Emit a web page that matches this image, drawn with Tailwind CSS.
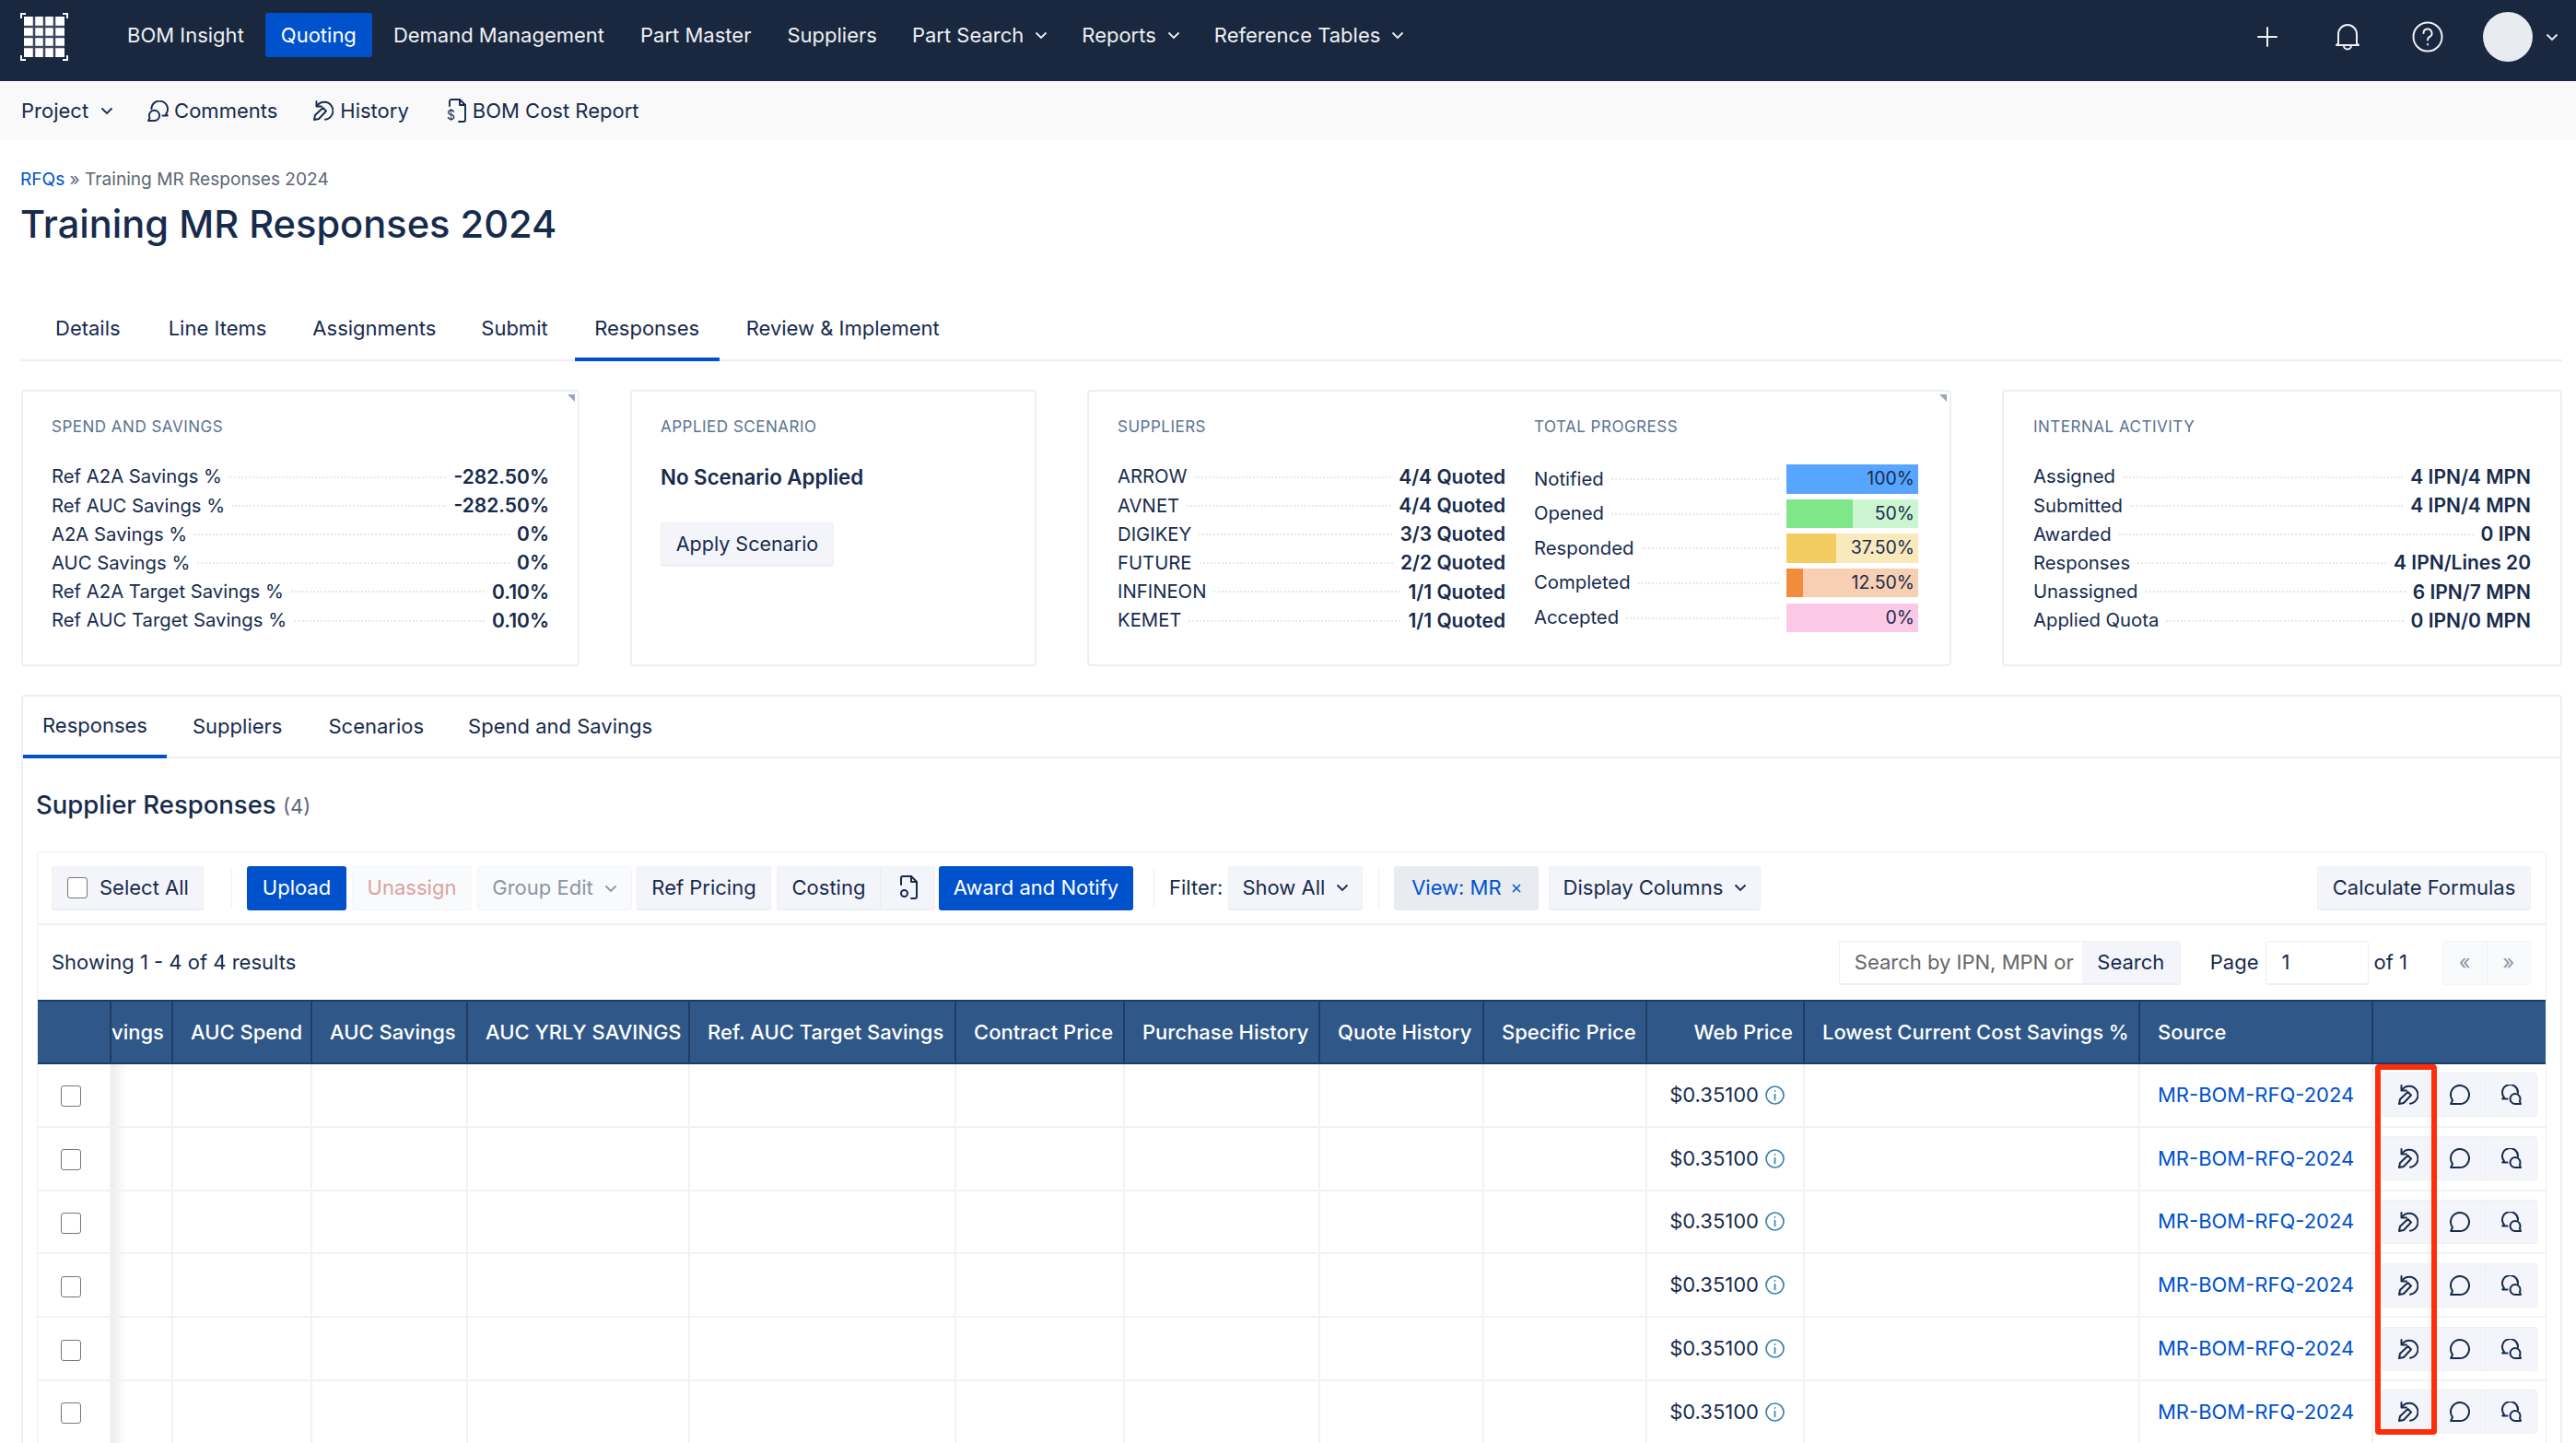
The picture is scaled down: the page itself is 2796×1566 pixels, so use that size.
<!DOCTYPE html>
<html lang="en">
<head>
    <meta charset="UTF-8">
    <meta name="viewport" content="width=device-width, initial-scale=1.0">
    <title>Training MR Responses 2024</title>
    <script src="https://cdn.jsdelivr.net/npm/@tailwindcss/browser@4"></script>
</head>
<body class="bg-white font-['Inter',sans-serif] text-[#172b4d] text-[22px]">
<div class="relative h-[1566px] overflow-hidden">

    <!-- top nav -->
    <header class="h-[88px] bg-[#19273f] flex items-center pl-[22px] pr-[19px] pb-[8px] text-[#eef0f4]">
        <svg class="w-[52px] h-[52px] mr-[47px]" viewBox="0 0 52 52" fill="none">
            <path d="M1 6V1h5M46 1h5v5M1 46v5h5M46 51h5v-5" stroke="#fff" stroke-width="2"/>
            <path d="M4 4h44v44H4z" fill="#fff"/>
            <path d="M15 4v44M26 4v44M37 4v44M4 15h44M4 26h44M4 37h44" stroke="#3a4760" stroke-width="2.500"/>
        </svg>
        <nav class="flex items-center gap-[6px] mb-[4px]">
            <a class="px-[17px] h-[48px] flex items-center">BOM Insight</a>
            <a class="px-[17px] h-[48px] flex items-center bg-[#0052cc] text-white rounded-[3px]">Quoting</a>
            <a class="px-[17px] h-[48px] flex items-center">Demand Management</a>
            <a class="pl-[16px] pr-[16px] h-[48px] flex items-center">Part Master</a>
            <a class="pl-[17px] pr-[15px] h-[48px] flex items-center">Suppliers</a>
            <a class="pl-[17px] pr-[14px] h-[48px] flex items-center gap-[12px]">Part Search <svg class="w-[14px] h-[14px]" viewBox="0 0 14 14" fill="none" stroke="currentColor" stroke-width="1.800"><path d="M1.500 4.500 7 10l5.500-5.500"/></svg></a>
            <a class="pl-[17px] pr-[14px] h-[48px] flex items-center gap-[12px]">Reports <svg class="w-[14px] h-[14px]" viewBox="0 0 14 14" fill="none" stroke="currentColor" stroke-width="1.800"><path d="M1.500 4.500 7 10l5.500-5.500"/></svg></a>
            <a class="px-[17px] h-[48px] flex items-center gap-[12px]">Reference Tables <svg class="w-[14px] h-[14px]" viewBox="0 0 14 14" fill="none" stroke="currentColor" stroke-width="1.800"><path d="M1.500 4.500 7 10l5.500-5.500"/></svg></a>
        </nav>
        <div class="ml-auto flex items-center">
            <svg class="w-[22px] h-[22px] mr-[62px]" viewBox="0 0 22 22" fill="none" stroke="currentColor" stroke-width="2" stroke-linecap="round"><path d="M11 1v20M1 11h20"/></svg>
            <svg class="w-[28px] h-[30px] mr-[56px]" viewBox="0 0 28 30" fill="none" stroke="currentColor" stroke-width="2" stroke-linejoin="round"><path d="M4 22V12a10 10 0 0 1 20 0v10l2 2H2zM10 24.500a4 4 0 0 0 8 0"/></svg>
            <svg class="w-[34px] h-[34px] mr-[43px]" viewBox="0 0 34 34" fill="none" stroke="currentColor" stroke-width="2" stroke-linecap="round"><circle cx="17" cy="17" r="15.500"/><path d="M12.500 13a4.500 4.500 0 1 1 6.500 4c-1.500.8-2 1.800-2 3.500"/><path d="M17 25v.5"/></svg>
            <div class="w-[54px] h-[54px] rounded-full bg-[#e8ebf0] mr-[14px]"></div>
            <svg class="w-[14px] h-[14px]" viewBox="0 0 14 14" fill="none" stroke="currentColor" stroke-width="1.800"><path d="M1.500 4.500 7 10l5.500-5.500"/></svg>
        </div>
    </header>

    <!-- project bar -->
    <div class="h-[64px] bg-[#f9f9f9] flex items-center pl-[23px]">
        <span class="flex items-center gap-[13px] mr-[37px]">Project <svg class="w-[14px] h-[14px]" viewBox="0 0 14 14" fill="none" stroke="currentColor" stroke-width="1.800"><path d="M1.500 4.500 7 10l5.500-5.500"/></svg></span>
        <span class="flex items-center gap-[6px] mr-[39px]">
            <svg class="w-[23px] h-[23px] -scale-x-100" viewBox="0 0 23 23" fill="none" stroke="currentColor" stroke-width="1.900" stroke-linecap="round" stroke-linejoin="round"><path d="M6.500 16.500H1.200L2.900 14.800A8.800 8.800 0 1 1 18.600 9.300"/><path d="M22 22h-6.500a5.600 5.600 0 1 1 5.600-5.600c0 1-.2 1.800-.6 2.600z"/></svg>
            Comments
        </span>
        <span class="flex items-center gap-[7px] mr-[41px]">
            <svg class="w-[22px] h-[22px]" viewBox="0 0 22 22" fill="none" stroke="currentColor" stroke-width="1.900" stroke-linecap="round" stroke-linejoin="round"><path d="M3.500 1v5.500H9"/><path d="M4 6A9.500 9.500 0 1 1 13 20.700"/><path d="m1 21 1-5 8.500-8 3.500 3.500L6 20z"/></svg>
            History
        </span>
        <span class="flex items-center gap-[7px]">
            <svg class="w-[21px] h-[26px]" viewBox="0 0 21 26" fill="none" stroke="currentColor" stroke-width="1.900" stroke-linecap="round" stroke-linejoin="round"><path d="M3 8V3a2 2 0 0 1 2-2h9l6 6v16a2 2 0 0 1-2 2h-5"/><path d="M14 1v6h6"/><text x="0" y="23" font-size="14" fill="currentColor" stroke="none">$</text></svg>
            BOM Cost Report
        </span>
    </div>

    <!-- page head -->
    <div class="pl-[22px] pr-[15px]">
        <div class="mt-[30px] text-[19.100px] leading-[24px] text-[#5e6675]"><a class="text-[#0052cc]">RFQs</a> » Training MR Responses 2024</div>
        <h1 class="mt-[12px] text-[41.600px] leading-[50px] font-medium text-[#172b4d]">Training MR Responses 2024</h1>

        <div class="mt-[53px] h-[71px] flex border-b-2 border-[#eeeeee]">
            <a class="ml-[12px] px-[26px] h-[71px] flex items-center">Details</a>
            <a class="pl-[26px] pr-[25px] h-[71px] flex items-center">Line Items</a>
            <a class="pl-[25px] pr-[25px] h-[71px] flex items-center">Assignments</a>
            <a class="pl-[24px] pr-[26px] h-[71px] flex items-center">Submit</a>
            <a class="ml-[3px] w-[157px] justify-center h-[71px] flex items-center border-b-[4px] border-[#0052cc] pt-[4px]">Responses</a>
            <a class="ml-[3px] px-[26px] h-[71px] flex items-center">Review &amp; Implement</a>
        </div>

        <!-- summary cards -->
        <div class="mt-[31px] flex items-start">
            <section class="relative w-[606px] h-[300px] border-2 border-[#eeeff1] rounded-[4px] px-[31px] pt-[26px] ml-[1px]">
                <div class="absolute right-[3px] top-[3px] w-0 h-0 border-l-[8px] border-l-transparent border-t-[8px] border-t-[#9aa5b5]"></div>
                <h3 class="text-[17px] leading-[24px] text-[#5a7390] tracking-[0.5px]">SPEND AND SAVINGS</h3>
                <dl id="spend" class="mt-[27px]"></dl>
            </section>
            <section class="w-[441px] h-[300px] border-2 border-[#eeeff1] rounded-[4px] px-[31px] pt-[26px] ml-[55px]">
                <h3 class="text-[17px] leading-[24px] text-[#5a7390] tracking-[0.5px]">APPLIED SCENARIO</h3>
                <p class="mt-[28px] leading-[30px] font-semibold text-[22.300px]">No Scenario Applied</p>
                <button class="mt-[34px] h-[48px] w-[188px] bg-[#f4f5fa] border border-[#eeeff1] border-b-2 rounded-[3px] text-[21.500px]">Apply Scenario</button>
            </section>
            <section class="relative w-[938px] h-[300px] border-2 border-[#eeeff1] rounded-[4px] pl-[31px] pr-[34px] pt-[26px] ml-[55px] flex">
                <div class="absolute right-[3px] top-[3px] w-0 h-0 border-l-[8px] border-l-transparent border-t-[8px] border-t-[#9aa5b5]"></div>
                <div class="w-[421px]">
                    <h3 class="text-[17px] leading-[24px] text-[#5a7390] tracking-[0.5px]">SUPPLIERS</h3>
                    <dl id="suppliers" class="mt-[27px]"></dl>
                </div>
                <div class="ml-[31px] flex-1">
                    <h3 class="text-[17px] leading-[24px] text-[#5a7390] tracking-[0.5px]">TOTAL PROGRESS</h3>
                    <div id="progress" class="mt-[29px] flex flex-col"></div>
                </div>
            </section>
            <section class="w-[608px] h-[300px] border-2 border-[#eeeff1] rounded-[4px] px-[32px] pt-[26px] ml-[55px]">
                <h3 class="text-[17px] leading-[24px] text-[#5a7390] tracking-[0.5px]">INTERNAL ACTIVITY</h3>
                <dl id="activity" class="mt-[27px]"></dl>
            </section>
        </div>

        <!-- responses panel -->
        <div class="mt-[31px] ml-[1px] w-[2758px] h-[814px] overflow-hidden border-2 border-b-0 border-[#eeeff1] rounded-t-[4px]">
            <div class="h-[67px] flex border-b-2 border-[#eeeff1]">
                <a class="w-[156px] justify-center flex items-center border-b-[4px] border-[#0052cc] h-[67px]">Responses</a>
                <a class="ml-[28px] flex items-center h-[65px]">Suppliers</a>
                <a class="ml-[50px] flex items-center h-[65px]">Scenarios</a>
                <a class="ml-[48px] flex items-center h-[65px]">Spend and Savings</a>
            </div>
            <h2 class="mt-[30px] ml-[14px] text-[27.500px] leading-[40px] font-medium">Supplier Responses <span class="text-[22px] font-normal text-[#5e6675]">(4)</span></h2>

            <div class="mt-[29px] ml-[15px] w-[2724px] border border-[#eeeff1] rounded-[4px] border-b-0">
                <!-- toolbar -->
                <div class="h-[79px] flex items-center pl-[15px] pr-[16px] border-b-2 border-[#eeeff1]">
                    <label class="w-[165px] h-[48px] flex items-center gap-[13px] pl-[16px] bg-[#f4f5fa] border border-[#eeeff1] border-b-2 rounded-[3px]"><span class="w-[22px] h-[23px] bg-white border border-[#777] rounded-[3px]"></span>Select All</label>
                    <span class="w-px h-[42px] bg-[#eeeff1] ml-[30px]"></span>
                    <button class="ml-[16px] w-[108px] h-[48px] bg-[#0052cc] text-white rounded-[3px]">Upload</button>
                    <button class="ml-[6px] w-[130px] h-[48px] bg-[#f9fafc] text-[#dba1a1] border border-[#f4f5f7] rounded-[3px]">Unassign</button>
                    <button class="ml-[6px] w-[168px] h-[48px] bg-[#f9fafc] text-[#8c95a4] border border-[#f4f5f7] rounded-[3px] flex items-center justify-center gap-[12px]">Group Edit <svg class="w-[14px] h-[14px]" viewBox="0 0 14 14" fill="none" stroke="currentColor" stroke-width="1.800"><path d="M1.500 4.500 7 10l5.500-5.500"/></svg></button>
                    <button class="ml-[5px] w-[146px] h-[48px] bg-[#f4f5fa] border border-[#eeeff1] border-b-2 rounded-[3px]">Ref Pricing</button>
                    <button class="ml-[6px] w-[113px] h-[48px] bg-[#f4f5fa] border border-[#eeeff1] border-b-2 rounded-l-[3px]">Costing</button>
                    <button class="w-[59px] h-[48px] bg-[#f4f5fa] border border-[#eeeff1] border-b-2 rounded-r-[3px] flex items-center justify-center">
                        <svg class="w-[20px] h-[26px]" viewBox="0 0 20 26" fill="none" stroke="currentColor" stroke-width="2" stroke-linecap="round" stroke-linejoin="round"><path d="M2 10V3a2 2 0 0 1 2-2h9l6 6v16a2 2 0 0 1-2 2h-4"/><path d="M13 1v6h6"/><circle cx="5.500" cy="19.500" r="3.500"/></svg>
                    </button>
                    <button class="ml-[4px] w-[211px] h-[48px] bg-[#0052cc] text-white rounded-[3px]">Award and Notify</button>
                    <span class="w-px h-[42px] bg-[#eeeff1] ml-[22px]"></span>
                    <span class="ml-[16px]">Filter:</span>
                    <button class="ml-[6px] w-[146px] h-[48px] bg-[#f4f5fa] border border-[#eeeff1] border-b-2 rounded-[3px] flex items-center justify-center gap-[12px]">Show All <svg class="w-[14px] h-[14px]" viewBox="0 0 14 14" fill="none" stroke="currentColor" stroke-width="1.800"><path d="M1.500 4.500 7 10l5.500-5.500"/></svg></button>
                    <span class="w-px h-[42px] bg-[#eeeff1] ml-[17px]"></span>
                    <button class="ml-[16px] w-[157px] h-[48px] bg-[#e8ebf0] text-[#0052cc] rounded-[3px] flex items-center justify-center gap-[10px]">View: MR <svg class="w-[12px] h-[12px]" viewBox="0 0 12 12" fill="none" stroke="currentColor" stroke-width="1.500"><path d="m2 2 8 8M10 2l-8 8"/></svg></button>
                    <button class="ml-[11px] w-[230px] h-[48px] bg-[#f4f5fa] border border-[#eeeff1] border-b-2 rounded-[3px] flex items-center justify-center gap-[12px]">Display Columns <svg class="w-[14px] h-[14px]" viewBox="0 0 14 14" fill="none" stroke="currentColor" stroke-width="1.800"><path d="M1.500 4.500 7 10l5.500-5.500"/></svg></button>
                    <button class="ml-auto w-[232px] h-[48px] bg-[#f4f5fa] border border-[#eeeff1] border-b-2 rounded-[3px]">Calculate Formulas</button>
                </div>

                <!-- results / search row -->
                <div class="h-[81px] flex items-center pl-[15px] pr-[16px]">
                    <span>Showing 1 - 4 of 4 results</span>
                    <div class="ml-auto w-[371px] h-[48px] flex border border-[#eeeff1] border-b-2 rounded-[3px]">
                        <span class="flex-1 flex items-center pl-[16px] text-[#666] whitespace-nowrap overflow-hidden">Search by IPN, MPN or</span>
                        <button class="w-[106px] bg-[#f4f5fa]">Search</button>
                    </div>
                    <span class="ml-[32px]">Page</span>
                    <span class="ml-[7px] w-[112px] h-[48px] flex items-center pl-[17px] border border-[#eeeff1] border-b-2 rounded-[3px]">1</span>
                    <span class="ml-[6px]">of 1</span>
                    <div class="ml-[38px] w-[96px] h-[48px] flex bg-[#f9fafc] border border-[#f4f5f7] rounded-[3px] text-[#8c95a4]">
                        <span class="flex-1 flex items-center justify-center border-r border-[#eeeff1]">«</span>
                        <span class="flex-1 flex items-center justify-center">»</span>
                    </div>
                </div>

                <!-- table -->
                <table class="table-fixed w-[2722px] border-collapse">
                    <colgroup>
                        <col class="w-[79px]"><col class="w-[67px]"><col class="w-[151px]"><col class="w-[169px]"><col class="w-[241px]"><col class="w-[289px]"><col class="w-[183px]"><col class="w-[212px]"><col class="w-[178px]"><col class="w-[177px]"><col class="w-[171px]"><col class="w-[364px]"><col class="w-[253px]"><col class="w-[188px]">
                    </colgroup>
                    <thead>
                        <tr class="h-[68px] bg-[#2f5888] text-white text-left">
                            <th class="font-medium border-y-2 border-[#1f3d63]"></th>
                            <th class="font-medium border-2 border-[#1f3d63] overflow-hidden whitespace-nowrap text-right pr-[11px]">vings</th>
                            <th class="font-medium border-2 border-[#1f3d63] pl-[19px] whitespace-nowrap">AUC Spend</th>
                            <th class="font-medium border-2 border-[#1f3d63] pl-[19px] whitespace-nowrap">AUC Savings</th>
                            <th class="font-medium border-2 border-[#1f3d63] pl-[19px] whitespace-nowrap">AUC YRLY SAVINGS</th>
                            <th class="font-medium border-2 border-[#1f3d63] pl-[19px] whitespace-nowrap">Ref. AUC Target Savings</th>
                            <th class="font-medium border-2 border-[#1f3d63] pl-[19px] whitespace-nowrap">Contract Price</th>
                            <th class="font-medium border-2 border-[#1f3d63] pl-[19px] whitespace-nowrap">Purchase History</th>
                            <th class="font-medium border-2 border-[#1f3d63] pl-[19px] whitespace-nowrap">Quote History</th>
                            <th class="font-medium border-2 border-[#1f3d63] pl-[19px] whitespace-nowrap">Specific Price</th>
                            <th class="font-medium border-2 border-[#1f3d63] text-right pr-[11px] whitespace-nowrap">Web Price</th>
                            <th class="font-medium border-2 border-[#1f3d63] pl-[19px] whitespace-nowrap">Lowest Current Cost Savings %</th>
                            <th class="font-medium border-2 border-[#1f3d63] pl-[19px] whitespace-nowrap">Source</th>
                            <th class="font-medium border-y-2 border-[#1f3d63]"></th>
                        </tr>
                    </thead>
                    <tbody id="rows"></tbody>
                </table>
            </div>
        </div>
    </div>

    <!-- red highlight round the history buttons -->
    <div class="absolute left-[2578px] top-[1155px] w-[67px] h-[402px] border-[6px] border-[#ff2d0a] rounded-[4px]"></div>
</div>

    <script>
        const spend = [['Ref A2A Savings %', '-282.50%'], ['Ref AUC Savings %', '-282.50%'], ['A2A Savings %', '0%'], ['AUC Savings %', '0%'], ['Ref A2A Target Savings %', '0.10%'], ['Ref AUC Target Savings %', '0.10%']];
        const suppliers = [['ARROW', '4/4 Quoted'], ['AVNET', '4/4 Quoted'], ['DIGIKEY', '3/3 Quoted'], ['FUTURE', '2/2 Quoted'], ['INFINEON', '1/1 Quoted'], ['KEMET', '1/1 Quoted']];
        const activity = [['Assigned', '4 IPN/4 MPN'], ['Submitted', '4 IPN/4 MPN'], ['Awarded', '0 IPN'], ['Responses', '4 IPN/Lines 20'], ['Unassigned', '6 IPN/7 MPN'], ['Applied Quota', '0 IPN/0 MPN']];

        function renderPairs(id, pairs) {
            document.getElementById(id).innerHTML = pairs.map(([label, value]) => `
                <div class="h-[31.200px] flex items-center text-[20.300px] whitespace-nowrap">
                    <dt>${label}</dt>
                    <span class="flex-1 mx-[8px] border-b-2 border-dotted border-[#e6e7ea]"></span>
                    <dd class="font-semibold text-[21px]">${value}</dd>
                </div>
            `).join('');
        }
        renderPairs('spend', spend);
        renderPairs('suppliers', suppliers);
        renderPairs('activity', activity);

        const progress = [
            ['Notified', '100%', 100, 'bg-[#57a5ff]', 'bg-[#57a5ff]', 'h-[32px]', 'mb-[6px]'],
            ['Opened', '50%', 50, 'bg-[#7fe68a]', 'bg-[#ccf6d0]', 'h-[31px]', 'mb-[6px]'],
            ['Responded', '37.50%', 37.5, 'bg-[#f2cc60]', 'bg-[#faeabb]', 'h-[32px]', 'mb-[6px]'],
            ['Completed', '12.50%', 12.5, 'bg-[#f28c3c]', 'bg-[#f8cfb2]', 'h-[31px]', 'mb-[7px]'],
            ['Accepted', '0%', 0, 'bg-[#fbc8e6]', 'bg-[#fbc8e6]', 'h-[31px]', 'mb-[0px]']
        ];
        document.getElementById('progress').innerHTML = progress.map(([label, text, pct, fill, track, height, gap]) => `
            <div class="flex items-center text-[20.300px] whitespace-nowrap ${gap}">
                <span>${label}</span>
                <span class="flex-1 mx-[8px] border-b-2 border-dotted border-[#e6e7ea]"></span>
                <div class="relative w-[143px] ${height} ${track} flex items-center justify-end pr-[4px]">
                    <div class="absolute left-0 top-0 bottom-0 ${fill}" style="width:${pct}%"></div>
                    <span class="relative text-[19.500px]">${text}</span>
                </div>
            </div>
        `).join('');

        const historyIcon = `<svg class="w-[22px] h-[22px]" viewBox="0 0 22 22" fill="none" stroke="currentColor" stroke-width="2" stroke-linecap="round" stroke-linejoin="round"><path d="M3.500 1v5.500H9"/><path d="M4 6A9.500 9.500 0 1 1 13 20.700"/><path d="m1 21 1-5 8.500-8 3.500 3.500L6 20z"/></svg>`;
        const commentIcon = `<svg class="w-[22px] h-[22px]" viewBox="0 0 22 22" fill="none" stroke="currentColor" stroke-width="2" stroke-linecap="round" stroke-linejoin="round"><path d="M1.200 21H11a10 10 0 1 0-8-4z"/></svg>`;
        const searchIcon = `<svg class="w-[22px] h-[22px]" viewBox="0 0 22 22" fill="none" stroke="currentColor" stroke-width="2" stroke-linecap="round" stroke-linejoin="round"><path d="M6.500 15.500H1.200L2.900 14A8.500 8.500 0 1 1 18 9"/><path d="M21 21h-6a5.500 5.500 0 1 1 5.500-5.500c0 1-.2 1.800-.6 2.600z"/></svg>`;
        const infoIcon = `<svg class="w-[21px] h-[21px] ml-[7px]" viewBox="0 0 21 21" fill="none" stroke="#3d82ad" stroke-width="1.700" stroke-linecap="round"><circle cx="10.500" cy="10.500" r="9.500"/><path d="M10.500 9.500v6M10.500 5.800v.3"/></svg>`;

        const emptyCell = '<td class="border-x-2 border-[#f1f2f4]"></td>';
        let rowsHTML = '';
        for (let i = 0; i < 6; i++) {
            rowsHTML += `
                <tr class="h-[68.800px] border-b-2 border-[#f1f2f4]">
                    <td class="text-center"><span class="inline-block align-middle w-[22px] h-[23px] border border-[#777] rounded-[3px] mr-[7px]"></span></td>
                    <td class="border-x-2 border-[#f1f2f4] bg-gradient-to-r from-[#ececec] to-white to-[24%]"></td>
                    ${emptyCell.repeat(8)}
                    <td class="border-x-2 border-[#f1f2f4]"><div class="flex items-center justify-end pr-[20px]">$0.35100${infoIcon}</div></td>
                    ${emptyCell}
                    <td class="border-x-2 border-[#f1f2f4] pl-[19px] text-[#0052cc] whitespace-nowrap">MR-BOM-RFQ-2024</td>
                    <td class="pl-[9px]">
                        <div class="flex w-[169px] h-[48px] bg-[#f4f5fa] border border-[#eeeff1] rounded-[3px]">
                            <span class="flex-1 flex items-center justify-center border-r border-[#eeeff1]">${historyIcon}</span>
                            <span class="flex-1 flex items-center justify-center border-r border-[#eeeff1]">${commentIcon}</span>
                            <span class="flex-1 flex items-center justify-center">${searchIcon}</span>
                        </div>
                    </td>
                </tr>
            `;
        }
        document.getElementById('rows').innerHTML = rowsHTML;
    </script>
</body>
</html>
